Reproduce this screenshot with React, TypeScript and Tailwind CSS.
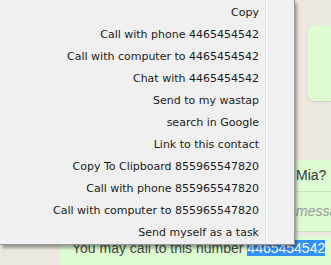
import React from "react";

const items = [
  "Copy",
  "Call with phone 4465454542",
  "Call with computer to 4465454542",
  "Chat with 4465454542",
  "Send to my wastap",
  "search in Google",
  "Link to this contact",
  "Copy To Clipboard 855965547820",
  "Call with phone 855965547820",
  "Call with computer to 855965547820",
  "Send myself as a task",
];

const ContextMenu: React.FC = () => (
  <div className="absolute left-0 top-0 w-[295px] bg-[#f0f0f0] border-r border-b border-[#979797] pt-[2px] shadow-[2px_3px_3px_rgba(0,0,0,0.35)] font-['DejaVu_Sans',sans-serif] text-[11px] text-[#1b1b1b]">
    <div className="absolute top-0 bottom-0 left-[265px] w-[2px] flex">
      <div className="w-px bg-[#e2e2e2]" />
      <div className="w-px bg-white" />
    </div>
    {items.map((label) => (
      <div key={label} className="h-[22px] flex items-center justify-end pr-[35px] whitespace-nowrap">
        {label}
      </div>
    ))}
  </div>
);

export default function App() {
  return (
    <div className="relative w-[331px] h-[265px] overflow-hidden bg-[#ece7e1] flex flex-col font-['Liberation_Sans',sans-serif]">
      <div className="shrink-0 mt-[25px] ml-[308px] h-[76px] bg-[#ddfcd2] rounded-l-[6px] shadow-[0_1px_1px_rgba(0,0,0,0.12)]" />
      <div className="shrink-0 mt-[59px] ml-[296px] bg-[#ddfcd2]">
        <div className="h-[32px] flex items-center text-[14px] text-[#3a3a3a] border-b border-[#c9e6bf]">Mia?</div>
        <div className="h-[40px] flex items-center text-[14px] italic text-[#9a9a9a] border-b border-[#c9e6bf] whitespace-nowrap">
          message
        </div>
      </div>
      <div className="flex-1 mt-[4px] ml-[60px] bg-[#ddfcd2] rounded-tl-[6px] pl-[12px] pt-[2px] text-[14px] text-[#4a4a4a] whitespace-nowrap">
        You may call to this number <span className="bg-[#3391ff] text-white">4465454542</span>
      </div>
      <ContextMenu />
    </div>
  );
}
